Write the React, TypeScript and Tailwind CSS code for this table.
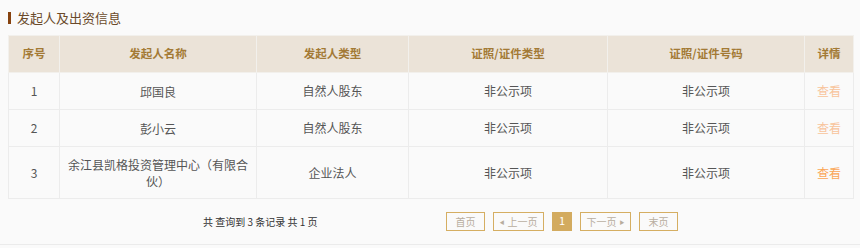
import React from "react";

interface Sponsor {
  id: number;
  name: string;
  type: string;
  certType: string;
  certNo: string;
  active: boolean;
}

const sponsors: Sponsor[] = [
  { id: 1, name: "邱国良", type: "自然人股东", certType: "非公示项", certNo: "非公示项", active: false },
  { id: 2, name: "彭小云", type: "自然人股东", certType: "非公示项", certNo: "非公示项", active: false },
  { id: 3, name: "余江县凯格投资管理中心（有限合伙）", type: "企业法人", certType: "非公示项", certNo: "非公示项", active: true },
];

const font = { fontFamily: '"Noto Sans CJK SC", "Noto Sans", sans-serif' };

export default function App() {
  return (
    <div className="w-[860px] h-[248px] bg-[#fafafa] overflow-hidden" style={font}>
      {/* Title */}
      <div className="flex items-center h-[35px] pl-2 pb-[1px]">
        <span className="w-[3px] h-[12px] bg-[#86420f] mr-[6px] mt-[1px]" />
        <span className="text-[13px] leading-none text-[#6b4a2a]">发起人及出资信息</span>
      </div>

      {/* Table */}
      <table className="ml-2 w-[845px] table-fixed border-collapse text-[12px] text-[#555]">
        <colgroup>
          <col className="w-[51px]" />
          <col className="w-[197px]" />
          <col className="w-[152px]" />
          <col className="w-[199px]" />
          <col className="w-[197px]" />
          <col className="w-[49px]" />
        </colgroup>
        <thead>
          <tr className="h-[37px] bg-[#ebe3d8] text-[#a37a35] text-[11.5px]">
            {["序号", "发起人名称", "发起人类型", "证照/证件类型", "证照/证件号码", "详情"].map((h) => (
              <th key={h} className="border border-[#f2f0ec] font-bold text-center">{h}</th>
            ))}
          </tr>
        </thead>
        <tbody>
          {sponsors.map((s) => (
            <tr key={s.id} className={s.id === 3 ? "h-[52px]" : "h-[37px]"}>
              <td className="border border-[#ececec] text-center">{s.id}</td>
              <td className="border border-[#ececec] text-center px-2 leading-[17px]">{s.name}</td>
              <td className="border border-[#ececec] text-center">{s.type}</td>
              <td className="border border-[#ececec] text-center">{s.certType}</td>
              <td className="border border-[#ececec] text-center">{s.certNo}</td>
              <td className={`border border-[#ececec] text-center ${s.active ? "text-[#fba656]" : "text-[#f8c49c]"}`}>查看</td>
            </tr>
          ))}
        </tbody>
      </table>

      {/* Pagination */}
      <div className="flex items-center h-[46px] border-b border-[#ebebeb]">
        <span className="ml-[203px] w-[243px] text-[10px] text-[#333]">共 查询到 3 条记录 共 1 页</span>
        <div className="flex items-center gap-[8px] text-[10px] text-[#b8ad9e]">
          <span className="w-[39px] h-[19px] border border-[#d5ae62] flex items-center justify-center leading-none">首页</span>
          <span className="w-[51px] h-[19px] border border-[#d5ae62] flex items-center justify-center leading-none">
            <span className="text-[5px] mr-[3px]">◀</span>上一页
          </span>
          <span className="w-[20px] h-[19px] bg-[#d3ab5f] text-white text-[11px] flex items-center justify-center leading-none pb-[3px]">1</span>
          <span className="w-[51px] h-[19px] border border-[#d5ae62] flex items-center justify-center leading-none">
            下一页<span className="text-[5px] ml-[3px]">▶</span>
          </span>
          <span className="w-[39px] h-[19px] border border-[#d5ae62] flex items-center justify-center leading-none">末页</span>
        </div>
      </div>
    </div>
  );
}
